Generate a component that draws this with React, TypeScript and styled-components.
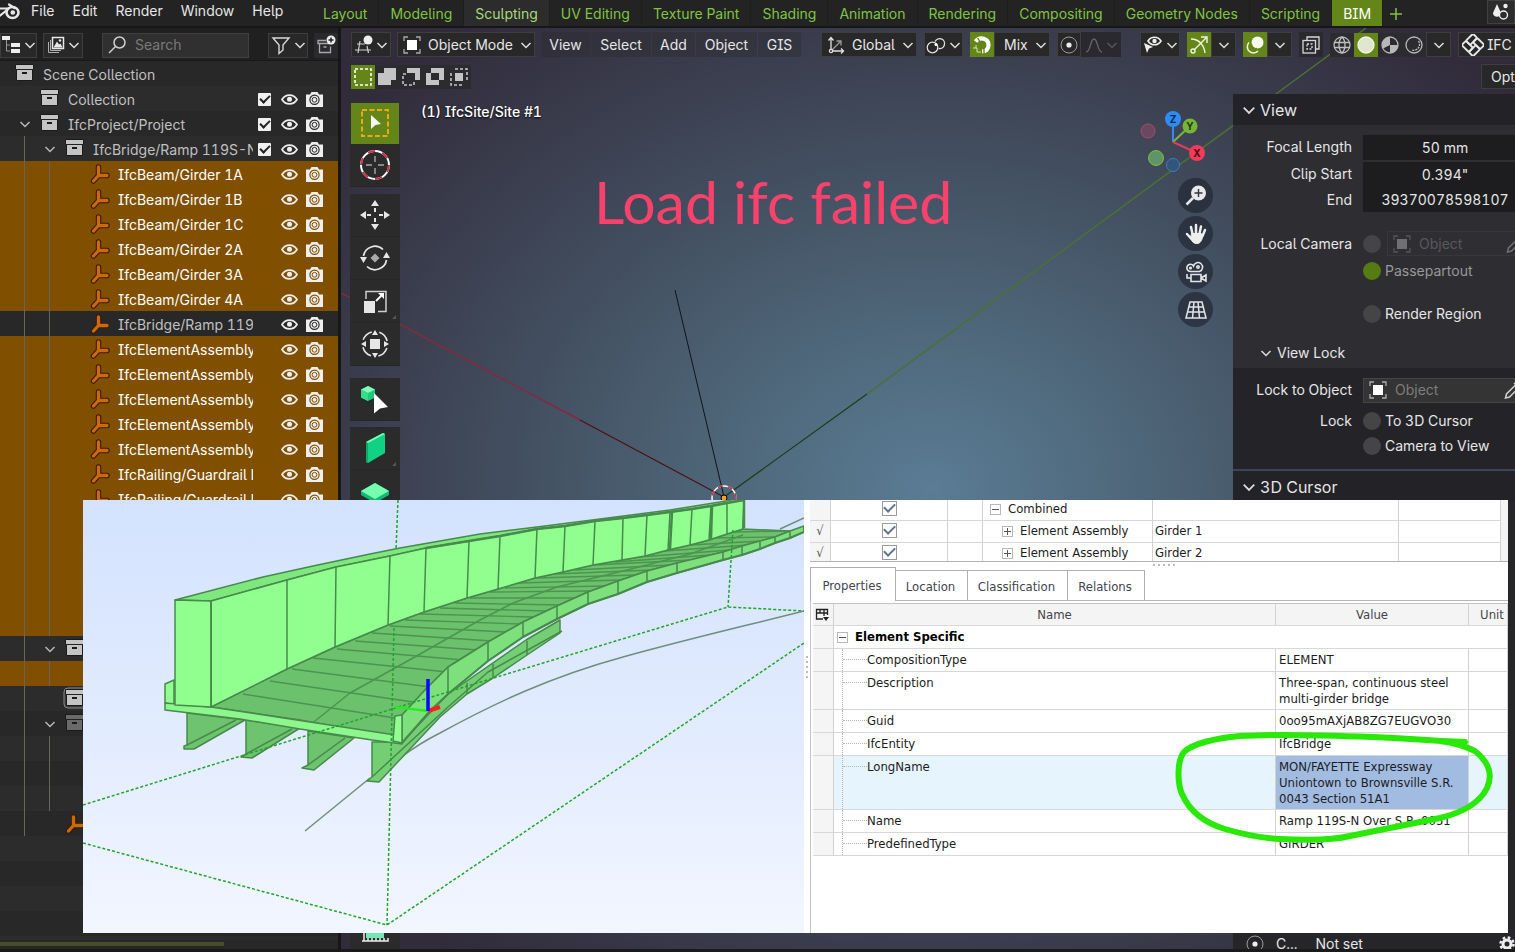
import React from "react";
import styled, { createGlobalStyle, css } from "styled-components";

const ui = `Inter, "Liberation Sans", sans-serif`;
const win = `"DejaVu Sans Condensed", "Noto Sans", sans-serif`;

const GlobalStyle = createGlobalStyle`
  * { box-sizing: border-box; }
  body { margin: 0; background: #181818; }
  button, input, select { font: inherit; color: inherit; margin: 0; font-feature-settings: inherit; }
  button { border: 0; background: none; padding: 0; }
  svg { display: block; flex-shrink: 0; }
`;

const Page = styled.div`
  position: relative;
  display: flex;
  flex-direction: column;
  height: 100vh;
  min-height: 600px;
  overflow: hidden;
  padding-bottom: 3px;
  background: #1a1a1a;
  color: #e6e6e6;
  font-family: ${ui};
  font-size: 14px;
  line-height: 20px;
  font-feature-settings: "cv08", "cv05", "tnum";
`;

/* ---------- top bar ---------- */

const TopBar = styled.header`
  display: flex;
  height: 28px;
  flex-shrink: 0;
  overflow: hidden;
  background: #232323;
  border-bottom: 2px solid #171717;
`;
const MainMenu = styled.nav`
  display: flex;
  width: 312px;
  flex-shrink: 0;
  height: 22px;
`;
const MenuButton = styled.button`
  padding: 0 9px;
  white-space: nowrap;
  flex-shrink: 0;
`;
const Logo = styled.span`
  width: 22px;
  flex-shrink: 0;
`;
const Workspaces = styled.nav`
  display: flex;
  flex: 1;
  min-width: 0;
  color: #80c341;
`;
const WorkspaceTab = styled.button<{ $state?: "active" | "hover" }>`
  padding: 2px 11px 0;
  border-right: 1px solid #1e1e1e;
  white-space: nowrap;
  flex-shrink: 0;
  ${(p) => p.$state === "hover" && css`background: #2c2c2c; color: #a8da78;`}
  ${(p) => p.$state === "active" && css`background: #648618; color: #ffffff;`}
`;
const AddTab = styled.button`
  width: 26px;
  padding-top: 2px;
  display: grid;
  place-items: center;
`;
const SceneButton = styled.button`
  width: 28px;
  height: 24px;
  flex-shrink: 0;
  background: #2c2c2c;
  border: 1px solid #404040;
`;

/* ---------- outliner ---------- */

const Body = styled.div`
  display: flex;
  flex: 1;
  min-height: 0;
`;
const Outliner = styled.aside`
  width: 341px;
  flex-shrink: 0;
  display: flex;
  flex-direction: column;
  background: #282828;
  border-right: 3px solid #171717;
  overflow: hidden;
`;
const OutlinerHeader = styled.div`
  display: flex;
  align-items: center;
  height: 33px;
  flex-shrink: 0;
  padding-top: 2px;
  background: #202020;
  border-bottom: 1px solid #191919;
`;
const IconButton = styled.button<{ $w: number; $ml?: number; $on?: boolean; $plain?: boolean }>`
  display: flex;
  align-items: center;
  justify-content: center;
  gap: 3px;
  width: ${(p) => p.$w}px;
  height: 25px;
  margin-left: ${(p) => p.$ml || 0}px;
  flex-shrink: 0;
  background: ${(p) => (p.$on ? "#648618" : p.$plain ? "#2a2a2e" : "#282828")};
  border: 1px solid ${(p) => (p.$on ? "#648618" : p.$plain ? "#2a2a2e" : "#3e3e3e")};
`;
const SearchBox = styled.label`
  display: flex;
  align-items: center;
  gap: 6px;
  width: 149px;
  height: 25px;
  margin-left: 19px;
  padding-left: 4px;
  background: #303030;
  border: 1px solid #404040;
  input {
    width: 100px;
    border: 0;
    padding: 0 0 0 2px;
    background: none;
    outline: 0;
  }
  input::placeholder { color: #7a7a7a; opacity: 1; }
`;
const Tree = styled.div`
  flex: 1;
  min-height: 0;
  overflow: hidden;
`;
const TreeRow = styled.div<{ $kind: "plain" | "selected"; $alt: boolean; $dim?: boolean }>`
  display: flex;
  align-items: center;
  height: 25px;
  padding: 0 11px 0 12px;
  background: ${(p) => (p.$kind === "selected" ? "#805000" : p.$alt ? "#2c2c2c" : "#282828")};
  color: ${(p) => (p.$kind === "selected" ? "#ffffff" : "#c0c0c0")};
`;
const Cell = styled.span`
  display: grid;
  place-items: center;
  width: 25px;
  height: 25px;
  flex-shrink: 0;
`;
const Guide = styled(Cell)`
  &::after { content: ""; width: 1px; height: 25px; background: #66665f; }
`;
const RowLabel = styled.span`
  flex: 1;
  min-width: 0;
  margin-left: 6px;
  padding-top: 2px;
  overflow: hidden;
  white-space: nowrap;
`;
const Toggles = styled.span`
  display: flex;
  justify-content: flex-end;
  width: 74px;
  padding-top: 1px;
  flex-shrink: 0;
`;
const RowCheck = styled.input`
  appearance: none;
  width: 13px;
  height: 13px;
  background: #f0f0f0;
  border-radius: 1px;
  display: grid;
  place-items: center;
  &::after {
    content: "";
    width: 8px;
    height: 4px;
    margin-top: -3px;
    border: solid #222222;
    border-width: 0 0 2px 2px;
    transform: rotate(-45deg);
  }
`;
const ScrollThumb = styled.div`
  width: 224px;
  height: 4px;
  margin: 2px 0 3px;
  flex-shrink: 0;
  background: #454d2b;
`;

/* ---------- viewport ---------- */

const Viewport = styled.main`
  position: relative;
  flex: 1;
  min-width: 0;
  display: flex;
  flex-direction: column;
  overflow: hidden;
  background: radial-gradient(ellipse 760px 600px at 590px 460px, #5a7c94 0%, #4e6679 28%, #414c5d 58%, #383848 82%, #312b3a 100%);
`;
const Scene = styled.svg`
  position: absolute;
  left: 0;
  top: 0;
`;
const ViewHeader = styled.div`
  position: relative;
  display: flex;
  align-items: center;
  height: 33px;
  padding-left: 10px;
  flex-shrink: 0;
`;
const Group = styled.div<{ $ml?: number; $gap?: number }>`
  display: flex;
  align-items: center;
  gap: ${(p) => p.$gap || 0}px;
  margin-left: ${(p) => p.$ml || 0}px;
  flex-shrink: 0;
`;
const HeaderMenu = styled.button<{ $w: number }>`
  width: ${(p) => p.$w}px;
  height: 25px;
  background: rgba(44, 44, 48, 0.45);
`;
const Picker = styled.label<{ $w: number }>`
  display: flex;
  align-items: center;
  width: ${(p) => p.$w}px;
  height: 25px;
  padding: 0 2px 0 5px;
  background: #282828;
  border: 1px solid #3e3e3e;
  select {
    appearance: none;
    flex: 1;
    min-width: 0;
    height: 23px;
    padding: 0 0 0 7px;
    border: 0;
    background: none;
    outline: 0;
  }
  select:first-child { padding-left: 4px; }
`;
const ShadeButton = styled.button<{ $on?: boolean }>`
  display: grid;
  place-items: center;
  width: 24px;
  height: 24px;
  background: ${(p) => (p.$on ? "#648618" : "#2c2c30")};
`;
const ToolSettings = styled.div`
  position: relative;
  display: flex;
  justify-content: space-between;
  align-items: center;
  height: 33px;
  padding: 0 0 2px 10px;
  flex-shrink: 0;
`;
const Options = styled.button`
  width: 34px;
  height: 25px;
  padding-left: 9px;
  overflow: hidden;
  text-align: left;
  background: #282828;
  border: 1px solid #3e3e3e;
  border-right: 0;
`;
const Workarea = styled.div`
  position: relative;
  display: flex;
  flex: 1;
  min-height: 0;
`;
const Toolbar = styled.div`
  display: flex;
  flex-direction: column;
  width: 50px;
  margin: 9px 0 0 9px;
  flex-shrink: 0;
`;
const Tool = styled.button<{ $on?: boolean; $gap?: number }>`
  position: relative;
  display: grid;
  place-items: center;
  width: ${(p) => (p.$on ? 48 : 50)}px;
  height: ${(p) => (p.$on ? 41 : 43)}px;
  margin: 0 auto ${(p) => p.$gap || 0}px;
  flex-shrink: 0;
  background: ${(p) => (p.$on ? "#648618" : "#2b2b2b")};
  border-bottom: 1px solid ${(p) => (p.$on ? "#648618" : "#262626")};
`;
const More = styled.span`
  position: absolute;
  right: 4px;
  bottom: 3px;
  border: 2px solid;
  border-color: transparent #555555 #555555 transparent;
`;
const Canvas = styled.div`
  position: relative;
  flex: 1;
  min-width: 0;
`;
const ActiveObject = styled.div`
  padding: 8px 0 0 21px;
  color: #ffffff;
  font-weight: 500;
  text-shadow: 0 1px 2px #000000;
`;
const Failure = styled.div`
  position: absolute;
  left: 194px;
  top: 72px;
  color: #f8426b;
  font: 59px/72px Lato, sans-serif;
  white-space: nowrap;
`;
const Navigation = styled.div`
  position: absolute;
  right: 20px;
  top: 14px;
  width: 78px;
  display: flex;
  flex-direction: column;
  align-items: flex-end;
  gap: 3px;
`;
const NavButton = styled.button`
  display: grid;
  place-items: center;
  width: 35px;
  height: 35px;
  border-radius: 50%;
  background: rgba(32, 36, 48, 0.66);
`;

/* ---------- sidebar ---------- */

const Sidebar = styled.aside`
  width: 282px;
  flex-shrink: 0;
  display: flex;
  flex-direction: column;
  overflow: hidden;
  background: #26262a;
`;
const PanelTitle = styled.button`
  display: flex;
  align-items: center;
  gap: 4px;
  height: 31px;
  padding: 1px 0 0 9px;
  flex-shrink: 0;
  font-size: 16px;
  background: #222227;
  text-align: left;
`;
const ViewPanel = styled.div`
  height: 243px;
  padding-top: 8px;
  background: #2e2e32;
  flex-shrink: 0;
`;
const LockPanel = styled.div`
  height: 103px;
  padding-top: 9px;
  border-bottom: 2px solid #3b4754;
  background: #242428;
  flex-shrink: 0;
`;
const Field = styled.div<{ $h: number; $mt?: number }>`
  display: flex;
  align-items: center;
  height: ${(p) => p.$h}px;
  margin-top: ${(p) => p.$mt || 0}px;
`;
const FieldLabel = styled.label`
  width: 119px;
  margin-right: 11px;
  text-align: right;
  flex-shrink: 0;
  white-space: nowrap;
`;
const NumberInput = styled.input`
  width: 164px;
  height: 25px;
  padding: 0;
  border: 0;
  flex-shrink: 0;
  text-align: center;
  background: #1d1d1f;
`;
const RoundCheck = styled.input`
  appearance: none;
  width: 18px;
  height: 18px;
  margin: 0 4px 0 0;
  flex-shrink: 0;
  border-radius: 50%;
  background: #454547;
  &:checked { background: #577b13; }
`;
const CheckLabel = styled.label<{ $dim?: boolean }>`
  display: flex;
  align-items: center;
  white-space: nowrap;
  color: ${(p) => (p.$dim ? "#98989a" : "#e6e6e6")};
`;
const Push = styled.span`
  width: 130px;
  flex-shrink: 0;
`;
const ObjectPicker = styled.button<{ $dim?: boolean; $w: number }>`
  display: flex;
  align-items: center;
  width: 168px;
  height: 25px;
  padding-left: 5px;
  flex-shrink: 0;
  color: ${(p) => (p.$dim ? "#58585a" : "#7d7d7d")};
  background: ${(p) => (p.$dim ? "#2f2f33" : "#343434")};
  border: 1px solid ${(p) => (p.$dim ? "#38383c" : "#444444")};
  span { width: ${(p) => p.$w}px; padding-left: 8px; text-align: left; }
`;
const SubTitle = styled.button`
  display: flex;
  align-items: center;
  gap: 5px;
  height: 30px;
  margin-top: 12px;
  padding-left: 27px;
`;
const SidebarFoot = styled.div`
  display: flex;
  align-items: center;
  gap: 11px;
  height: 14px;
  margin-top: auto;
  padding: 3px 0 0 12px;
  flex-shrink: 0;
`;
const FootValue = styled.span`
  width: 181px;
  padding-left: 7px;
`;

/* ---------- IFC viewer window ---------- */

const ViewerWindow = styled.section`
  position: absolute;
  left: 83px;
  right: 7px;
  top: 500px;
  bottom: 19px;
  display: flex;
  overflow: hidden;
  background: #ffffff;
  color: #1c1c22;
  font-family: ${win};
  font-size: 13px;
  line-height: 16px;
  font-feature-settings: normal;
`;
const ModelView = styled.div`
  width: 721px;
  flex-shrink: 0;
  overflow: hidden;
  background: linear-gradient(#d3e2fe, #e4edff 60%, #f2f6ff);
`;
const Splitter = styled.div`
  width: 6px;
  flex-shrink: 0;
  display: flex;
  flex-direction: column;
  align-items: center;
  padding-top: 156px;
  gap: 3px;
  i { width: 2px; height: 2px; background: #bbbbbb; }
`;
const Details = styled.div`
  flex: 1;
  min-width: 0;
  display: flex;
  flex-direction: column;
  overflow: hidden;
`;
const ElementPane = styled.div`
  height: 62px;
  padding-right: 7px;
  overflow: hidden;
  flex-shrink: 0;
  background: #f3f3f3;
  border-bottom: 1px solid #b4b4b4;
`;
const Grid = styled.table`
  width: 100%;
  table-layout: fixed;
  border-collapse: separate;
  border-spacing: 0;
  background: #ffffff;
  th, td {
    border-right: 1px solid #d2d2d2;
    border-bottom: 1px solid #d8d8d8;
    padding: 3px 2px 2px;
    text-align: left;
    vertical-align: top;
    font-weight: 400;
  }
`;
const ElementRow = styled.tr`
  height: 22px;
  td { padding-top: 2px; }
  &:first-child { height: 21px; }
  &:first-child td { padding-top: 1px; }
`;
const MarkCell = styled.td`
  && { background: #f5f5f5; color: #555555; text-align: center; }
`;
const CenterCell = styled.td`
  && { text-align: center; }
`;
const GridCheck = styled.input`
  appearance: none;
  width: 15px;
  height: 15px;
  border: 1px solid #9b9b9b;
  background: #ffffff;
  display: inline-grid;
  vertical-align: top;
  place-items: center;
  &::after {
    content: "";
    width: 9px;
    height: 5px;
    margin-top: -4px;
    border: solid #5b7595;
    border-width: 0 0 2px 2px;
    transform: rotate(-45deg);
  }
`;
const Branch = styled.span<{ $depth: number }>`
  display: flex;
  align-items: center;
  padding-left: ${(p) => p.$depth}px;
  white-space: nowrap;
`;
const Expander = styled.button`
  display: grid;
  place-items: center;
  width: 11px;
  height: 11px;
  margin-right: 7px;
  flex-shrink: 0;
  border: 1px solid #b8b8b8;
  background: #ffffff;
`;
const Grip = styled.div`
  display: flex;
  gap: 3px;
  height: 5px;
  padding: 2px 0 0 343px;
  flex-shrink: 0;
  i { width: 2px; height: 2px; background: #bbbbbb; }
`;
const TabStrip = styled.div`
  display: flex;
  align-items: flex-end;
  height: 34px;
  flex-shrink: 0;
  border-bottom: 1px solid #b4b4b4;
`;
const Tab = styled.button<{ $w: number; $active?: boolean }>`
  width: ${(p) => p.$w}px;
  height: ${(p) => (p.$active ? 34 : 30)}px;
  padding: 2px 2px 0 0;
  margin-bottom: ${(p) => (p.$active ? -1 : 0)}px;
  color: #444450;
  background: #ffffff;
  border: 1px solid #b0b0b0;
  border-left-width: ${(p) => (p.$active ? 1 : 0)}px;
  border-bottom: 0;
`;
const PropertyPane = styled.div`
  flex: 1;
  padding: 2px 0 0 2px;
  border-left: 1px solid #c4c4c4;
`;
const HeadRow = styled.tr`
  height: 23px;
  th {
    padding-top: 2px;
    text-align: center;
    vertical-align: middle;
    color: #44444c;
    background: #f4f4f4;
    border-top: 1px solid #c4c4c4;
  }
  th:last-child { padding-left: 10px; }
`;
const PropRow = styled.tr<{ $current?: boolean }>`
  height: 23px;
  td { background: ${(p) => (p.$current ? "#e6f4fe" : "#ffffff")}; }
  td:nth-child(3) { padding-left: 3px; background: ${(p) => (p.$current ? "#a2bbe1" : "#ffffff")}; }
`;
const PropName = styled.td`
  && { padding: 0; height: 1px; }
  > span {
    display: block;
    position: relative;
    height: 100%;
    min-height: 22px;
    margin-left: 8px;
    padding: 3px 0 0 24px;
    border-left: 1px dotted #b5b5b5;
  }
  > span::before {
    content: "";
    position: absolute;
    left: 0;
    top: 10px;
    width: 24px;
    border-top: 1px dotted #b5b5b5;
  }
`;
const GroupCell = styled.td`
  && { padding-left: 3px; font-weight: 700; color: #000000; }
`;
const Marker = styled.svg`
  position: absolute;
  right: 0;
  top: 228px;
`;

/* ---------- icons ---------- */

const Chevron = ({ c = "#dddddd", s = 12 }: { c?: string; s?: number }) => (
  <svg width={s} height={s} viewBox="0 0 12 12" fill="none" stroke={c} strokeWidth="1.500">
    <path d="M1.500 4 6 8.500 10.500 4" />
  </svg>
);

const BlenderLogo = () => (
  <svg width="22" height="22" viewBox="0 0 22 22" fill="none" stroke="#e8e8e8">
    <path d="M9 4.500 14.500 8" strokeWidth="2.200" strokeLinecap="round" />
    <path d="M-1 8.500h10M-1 16.500 7 10" strokeWidth="2.200" />
    <ellipse cx="12.500" cy="12.500" rx="6" ry="5.500" strokeWidth="2.600" />
    <circle cx="12.800" cy="12.500" r="2.300" fill="#e8e8e8" stroke="none" />
  </svg>
);

const OutlinerIcon = () => (
  <svg width="19" height="20" viewBox="0 0 19 20" fill="#eeeeee">
    <rect x="0" y="1" width="8" height="4" />
    <rect x="9" y="8" width="9" height="4" />
    <rect x="9" y="14" width="9" height="4" />
    <path d="M4.500 5v11H8M4.500 10H8" fill="none" stroke="#999999" />
  </svg>
);

const ImagesIcon = () => (
  <svg width="18" height="18" viewBox="0 0 18 18" fill="none" stroke="#e8e8e8">
    <path d="M5.500 1.500h11v11h-11z" strokeWidth="1.500" />
    <path d="M3.500 4v10.500H14M1.500 6v10.500H12" stroke="#b0b0b0" />
    <path d="M6.500 11.500 10 5.500l2 3 1.500-1 2 4z" fill="#e8e8e8" stroke="none" />
    <circle cx="13" cy="4.500" r="1.200" fill="#e8e8e8" stroke="none" />
  </svg>
);

const SearchIcon = () => (
  <svg width="20" height="20" viewBox="0 0 20 20" fill="none" stroke="#d0d0d0" strokeWidth="1.500">
    <circle cx="12.500" cy="7.500" r="5.500" />
    <path d="M8.500 11.500 2 18" />
  </svg>
);

const FunnelIcon = () => (
  <svg width="20" height="19" viewBox="0 0 20 19" fill="none" stroke="#d8d8d8" strokeWidth="1.400">
    <path d="M2 2h16l-6 7v5l-4 3.500V9z" />
  </svg>
);

const AddCollectionIcon = () => (
  <svg width="20" height="20" viewBox="0 0 20 20" fill="none" stroke="#a8a8a8" strokeWidth="1.300">
    <path d="M10 5.500H2v3h12M3.500 8.500v9h11v-6M7.500 12h3" />
    <circle cx="15" cy="5" r="4.500" fill="#eeeeee" stroke="none" />
    <path d="M15 2.500v5M12.500 5h5" stroke="#222222" strokeWidth="1.500" />
  </svg>
);

const BoxIcon = ({ fade, ring }: { fade?: boolean; ring?: boolean }) => {
  const c = fade ? "#6a6a6a" : "#c4c4c4";
  return (
    <svg width="23" height="23" viewBox="0 0 23 23">
      {ring && <rect x="1" y="1" width="24" height="20" rx="4" fill="#383838" stroke="#8a8a8a" />}
      <path d="M2.500 2.500h18v5h-1v11h-16v-11h-1z" fill={c} stroke="#1a1a1a" />
      <path d="M3 7.500h17" stroke="#222222" />
      <rect x="9" y="10" width="5" height="2" fill="#1a1a1a" />
    </svg>
  );
};

const EmptyIcon = () => (
  <svg width="22" height="22" viewBox="0 0 22 22" fill="none" strokeLinecap="round" strokeLinejoin="round">
    <path d="M9.500 4V12.500L4.500 18M9.500 12.500h8.500" stroke="#3a1a00" strokeWidth="5.500" />
    <path d="M9.500 4V12.500L4.500 18M9.500 12.500h8.500" stroke="#cc6a08" strokeWidth="3.300" />
  </svg>
);

const EyeIcon = () => (
  <svg width="17" height="13" viewBox="0 0 17 13">
    <path d="M1 6.500C4.500.6 12.500.6 16 6.500c-3.500 5.900-11.500 5.900-15 0z" fill="none" stroke="#eeeeee" strokeWidth="1.700" />
    <circle cx="8.500" cy="6.300" r="2.500" fill="#eeeeee" />
  </svg>
);

const CameraIcon = ({ bg }: { bg: string }) => (
  <svg width="17" height="15" viewBox="0 0 17 15">
    <path d="M0 2.500h4L5.500 0h6L13 2.500h4V15H0z" fill="#eeeeee" />
    <circle cx="8.500" cy="7.800" r="4.600" fill="none" stroke={bg} strokeWidth="1.200" />
    <circle cx="8.500" cy="7.800" r="2.400" fill="none" stroke={bg} strokeWidth="1" />
  </svg>
);

const GridBallIcon = () => (
  <svg width="18" height="20" viewBox="0 0 18 20" fill="none" stroke="#d0d0d0" strokeWidth="1.200">
    <path d="M2 9h8M0 15h16M5 6 3 18M12 11l1.500 7" />
    <circle cx="13" cy="5" r="4.500" fill="#eeeeee" stroke="none" />
  </svg>
);

const ObjectIcon = ({ c = "#ffffff" }: { c?: string }) => (
  <svg width="18" height="18" viewBox="0 0 18 18" fill="none" stroke={c} strokeWidth="1.300">
    <path d="M1 5V1h4M13 1h4v4M17 13v4h-4M5 17H1v-4" opacity="0.600" />
    <rect x="4" y="4" width="10" height="10" fill={c} stroke="none" />
  </svg>
);

const AxesIcon = () => (
  <svg width="18" height="18" viewBox="0 0 18 18" fill="none" stroke="#e2e2e2" strokeWidth="1.300">
    <path d="M4 2v13h12M1.500 4.500 4 1.500l2.500 3M14 12.500l2.500 2.500-2.500 2.500" />
    <path d="m4 15 10-10M9.500 5H14v4.500" stroke="#9a9a9a" />
    <circle cx="4" cy="15" r="1.600" fill="#222222" />
  </svg>
);

const LinkIcon = () => (
  <svg width="20" height="20" viewBox="0 0 20 20" fill="none" stroke="#e2e2e2" strokeWidth="1.300">
    <circle cx="6.500" cy="12.500" r="5.300" />
    <path d="M9 6.500a5 5 0 1 1 3.500 7" />
    <circle cx="10" cy="9.500" r="1.500" fill="#ffffff" stroke="none" />
  </svg>
);

const MagnetIcon = () => (
  <svg width="20" height="20" viewBox="0 0 20 20" fill="none" stroke="#ffffff" strokeWidth="4.200">
    <path d="M3.500 6.500C8 1 16.500 3.500 16.500 10c0 4-2.500 6.500-6.500 6.500" />
    <path d="m5.500 3 4 6M12 12v7" stroke="#648618" strokeWidth="1.300" />
    <path d="M1 13h4v4h4M4 10v3" strokeWidth="1" stroke="#d5e2b8" />
  </svg>
);

const TargetIcon = () => (
  <svg width="20" height="20" viewBox="0 0 20 20">
    <circle cx="10" cy="10" r="8" fill="none" stroke="#9a9a9a" />
    <circle cx="10" cy="10" r="2.600" fill="#eeeeee" />
  </svg>
);

const FalloffIcon = () => (
  <svg width="18" height="18" viewBox="0 0 18 18" fill="none" stroke="#66666e" strokeWidth="1.300">
    <path d="M1 16c5 0 4-13 8-13s3 13 8 13" />
  </svg>
);

const VisibilityIcon = () => (
  <svg width="20" height="20" viewBox="0 0 20 20">
    <path d="M5 6c3-5 10-5 13 0-3 5-10 5-13 0z" fill="none" stroke="#eeeeee" strokeWidth="1.600" />
    <circle cx="11.500" cy="6" r="2.200" fill="#eeeeee" />
    <path d="m1 8 9 4-4 1.500L4 18z" fill="#eeeeee" />
  </svg>
);

const GizmoIcon = () => (
  <svg width="20" height="20" viewBox="0 0 20 20" fill="none" stroke="#f0f5e0" strokeWidth="1.400">
    <path d="M2 4c8 0 13 6 14 14M5 15 17 3M12 2h6v6" />
    <circle cx="4" cy="16" r="2" />
  </svg>
);

const OverlayIcon = () => (
  <svg width="20" height="20" viewBox="0 0 20 20">
    <circle cx="12.500" cy="7.500" r="6" fill="#f5f9ea" />
    <path d="M4 7.500A6 6 0 1 0 13 16" fill="none" stroke="#f0f5e0" strokeWidth="1.500" />
    <path d="M6.500 8.500a4.500 4.500 0 0 0 5.500 5" fill="none" stroke="#648618" strokeWidth="1.300" />
  </svg>
);

const XrayIcon = () => (
  <svg width="20" height="20" viewBox="0 0 20 20" fill="none" stroke="#d8d8d8" strokeWidth="1.300">
    <path d="M6 5V2h12v12h-3" />
    <rect x="2" y="5.500" width="12.500" height="12.500" />
    <path d="M6 9h5v5H6z" strokeDasharray="2 1.500" />
  </svg>
);

const SphereIcon = ({ kind }: { kind: "wire" | "solid" | "material" | "render" }) => (
  <svg width="20" height="20" viewBox="0 0 20 20" fill="none" stroke="#c0c0c0" strokeWidth="1.300">
    <circle cx="10" cy="10" r="8" fill={kind === "solid" ? "#dfe6cd" : "none"} stroke={kind === "solid" ? "#f3f6ea" : "#b8b8b8"} />
    {kind === "wire" && <path d="M2 7.500h16M2 12.500h16M10 2c-4 4-4 12 0 16M10 2c4 4 4 12 0 16" />}
    {kind === "material" && <path d="M10 10V18A8 8 0 0 0 18 10zM10 2v8l-7 3.500A8 8 0 0 1 10 2z" fill="#b8b8b8" stroke="none" />}
    {kind === "render" && <path d="M14.500 6a6 6 0 0 1-7 9" strokeDasharray="2 1" />}
  </svg>
);

const KnotIcon = () => (
  <svg width="22" height="22" viewBox="0 0 22 22" fill="none" stroke="#e8e8e8" strokeWidth="1.900">
    <g transform="rotate(45 11 11)">
      <rect x="3" y="3" width="6" height="10" rx="1.500" />
      <rect x="13" y="9" width="6" height="10" rx="1.500" />
      <rect x="9" y="3" width="10" height="6" rx="1.500" />
      <rect x="3" y="13" width="10" height="6" rx="1.500" />
    </g>
  </svg>
);

const DropsIcon = () => (
  <svg width="22" height="22" viewBox="0 0 22 22">
    <path d="m9 3 4 9c0 5-8 5-8 0z" fill="#eeeeee" />
    <circle cx="15.500" cy="14" r="4" fill="#2c2c2c" stroke="#eeeeee" strokeWidth="1.400" />
    <circle cx="17.500" cy="5" r="2.200" fill="#eeeeee" />
  </svg>
);

const PenIcon = ({ c }: { c: string }) => (
  <svg width="18" height="18" viewBox="0 0 18 18" fill="none" stroke={c} strokeWidth="1.500">
    <path d="m1.500 17 1-4 9-9 3 3-9 9zM10 2l6 6" />
  </svg>
);

type SelectMode = "set" | "extend" | "subtract" | "invert" | "intersect";
const ModeIcon = ({ mode }: { mode: SelectMode }) => (
  <svg width="18" height="18" viewBox="0 0 18 18" fill="#c4c4c4">
    {mode === "set" && <rect x="1" y="1" width="16" height="16" fill="none" stroke="#ffffff" strokeWidth="1.600" strokeDasharray="3 2" />}
    {mode === "extend" && <path d="M6 0h12v12h-5v5H0V5h6z" />}
    {mode === "subtract" && <><path d="M5 0h13v12h-5V5H5z" /><path d="M4 6H1v11h11v-4" fill="none" stroke="#c4c4c4" strokeWidth="1.600" strokeDasharray="3 2" /></>}
    {mode === "invert" && <path fillRule="evenodd" d="M5 0h13v12h-5v5H0V5h5zM5 5v7h8V5z" />}
    {mode === "intersect" && <><rect x="5" y="5" width="8" height="8" /><path d="M5 1h12v12M1 5v12h12" fill="none" stroke="#c4c4c4" strokeWidth="1.600" strokeDasharray="3 2" /></>}
  </svg>
);

const SelectBoxTool = () => (
  <svg width="30" height="30" viewBox="0 0 30 30">
    <rect x="2" y="2" width="26" height="26" fill="none" stroke="#e8a91c" strokeWidth="2" strokeDasharray="5 2.500" />
    <path d="m11 7 10 9-5.500 1L11 21z" fill="#f4f4f4" />
  </svg>
);
const CursorTool = () => (
  <svg width="32" height="32" viewBox="0 0 32 32" fill="none">
    <circle cx="16" cy="16" r="14" stroke="#ffffff" strokeWidth="2" />
    <circle cx="16" cy="16" r="14" stroke="#c8324a" strokeWidth="2" strokeDasharray="7.300 7.300" />
    <path d="M16 7v6M16 19v6M7 16h6M19 16h6" stroke="#a8a8a8" strokeWidth="1.400" />
  </svg>
);
const MoveTool = () => (
  <svg width="30" height="30" viewBox="0 0 30 30" fill="#e6e6e6">
    <path d="m15 0 4 6h-8zM15 30l4-6h-8zM0 15l6-4v8zM30 15l-6-4v8zM14 8h2v4h-2zM14 18h2v4h-2zM7 14h4v2H7zM19 14h4v2h-4z" />
  </svg>
);
const RotateTool = () => (
  <svg width="30" height="28" viewBox="0 0 30 28" fill="none" stroke="#e6e6e6" strokeWidth="1.700">
    <path d="M3.500 12C5 3 16-1 23 5.500M26.500 16C25 25 14 29 7 22.500" />
    <path d="M0 13h7l-3.500 6zM23 14h7l-3.500-6z" fill="#e6e6e6" stroke="none" />
    <path d="m15 9.500 4.500 4.500-4.500 4.500-4.500-4.500z" fill="#aaaaaa" stroke="none" />
  </svg>
);
const ScaleTool = () => (
  <svg width="26" height="26" viewBox="0 0 26 26" fill="none" stroke="#cfcfcf" strokeWidth="1.500">
    <path d="M4 11V3.500h20v20h-8" />
    <rect x="2" y="13" width="11" height="12" fill="#e6e6e6" stroke="none" />
    <path d="m14 13 6-6" stroke="#ffffff" strokeWidth="1.800" />
    <path d="M22 5v6l-6-6z" fill="#ffffff" stroke="none" />
  </svg>
);
const TransformTool = () => (
  <svg width="30" height="30" viewBox="0 0 30 30" fill="#e6e6e6">
    <circle cx="15" cy="15" r="12.500" fill="none" stroke="#e6e6e6" strokeWidth="1.600" strokeDasharray="12 7.630" strokeDashoffset="-4" />
    <rect x="10" y="10" width="10" height="10" />
    <path d="m15 1 3 5h-6zM15 29l3-5h-6zM1 15l5-3v6zM29 15l-5-3v6z" />
  </svg>
);
const CubeCursorTool = () => (
  <svg width="32" height="32" viewBox="0 0 32 32">
    <path d="m9 3 7 3.500v8L9 18l-7-3.500v-8z" fill="#1fc978" />
    <path d="m9 3 7 3.500L9 10 2 6.500z" fill="#83ffb8" />
    <path d="M9 10v8l-7-3.500v-8z" fill="#36dd8b" />
    <path d="m15 10 14 14-8 1.500-6 5z" fill="#ffffff" />
  </svg>
);
const WallTool = () => (
  <svg width="28" height="34" viewBox="0 0 28 34">
    <path d="M5 11 22 2l2 1v19L7 32l-2-1z" fill="#11d183" />
    <path d="M5 11 22 2l2 1L7 12z" fill="#77ffb6" />
    <path d="m5 11 2 1v20l-2-1z" fill="#0aa968" />
  </svg>
);
const SlabTool = () => (
  <svg width="30" height="24" viewBox="0 0 30 24">
    <path d="m1 12 14-8 14 8v4l-14 8-14-8z" fill="#12b873" />
    <path d="m1 12 14-8 14 8-14 8z" fill="#77ffb0" />
  </svg>
);
const TerrainTool = () => (
  <svg width="28" height="14" viewBox="0 0 28 14">
    <rect x="5" y="1" width="18" height="8" fill="#72e8b4" />
    <path d="M1 12h26V9M3 1v11M7 12V9M11 12V9M15 12V9M19 12V9M23 12V9" stroke="#eeeeee" strokeWidth="1.500" fill="none" />
  </svg>
);

const AxisGizmo = () => (
  <svg width="78" height="67" viewBox="-6 0 78 67" fontFamily="Inter, sans-serif" fontSize="10" fontWeight="700" textAnchor="middle">
    <g strokeWidth="2">
      <path d="M32 34V12" stroke="#2f8bf5" />
      <path d="m32 34 17-16" stroke="#77b53a" />
      <path d="m32 34 24 11" stroke="#e23c5c" />
    </g>
    <circle cx="7" cy="23" r="7" fill="#6a4862" stroke="#a84a68" />
    <circle cx="15" cy="50" r="7.500" fill="#5e9468" stroke="#7cc038" />
    <circle cx="32" cy="57" r="6.500" fill="#33557c" stroke="#3a7cc0" />
    <circle cx="32" cy="11" r="8" fill="#2f8bf5" />
    <circle cx="49" cy="18" r="7.500" fill="#77b53a" />
    <circle cx="56" cy="45" r="8" fill="#f13b5b" />
    <text x="32" y="15" fill="#0e2a4c">Z</text>
    <text x="49" y="22" fill="#203a08">Y</text>
    <text x="56" y="49" fill="#4c0814">X</text>
  </svg>
);
const ZoomIcon = () => (
  <svg width="22" height="22" viewBox="0 0 22 22">
    <circle cx="13.500" cy="8" r="7.500" fill="#e8e8ec" />
    <path d="m8 13-6.500 6.500" stroke="#e8e8ec" strokeWidth="2.500" />
    <path d="M13.500 4v8M9.500 8h8" stroke="#2c3440" strokeWidth="1.400" />
  </svg>
);
const HandIcon = () => (
  <svg width="22" height="22" viewBox="0 0 22 22" fill="none" stroke="#eeeeee" strokeWidth="2.500" strokeLinecap="round">
    <path d="M7.500 11 6 4M11 10V2M14.500 10.500 16 3.500M17.500 13l2.500-6M6.500 16 2 11" />
    <path d="M7 10.500h9l2 1.500c-1 6-3 8.500-6 8.500-4 0-5-2-6.500-5.500z" fill="#eeeeee" strokeWidth="1" />
  </svg>
);
const MovieIcon = () => (
  <svg width="24" height="24" viewBox="0 0 24 24" fill="none" stroke="#e4e4e8" strokeWidth="1.600">
    <path d="M6.500 11.500a3.600 3.600 0 1 1 3-5.500 4.600 4.600 0 1 1 6 5.500z" />
    <circle cx="6.500" cy="8" r="0.800" />
    <circle cx="14" cy="7" r="1.200" />
    <path d="M7 14.500h10v7H7zM3 14v4h4M17 18l5-3v6z" />
  </svg>
);
const PerspectiveIcon = () => (
  <svg width="22" height="18" viewBox="0 0 22 18" fill="none" stroke="#e4e4e8" strokeWidth="1.500">
    <path d="M5 1h12l4 16H1zM4 6h14M2.500 11h17M9 1 7.500 17M13 1l1.500 16" />
  </svg>
);
const GearIcon = () => (
  <svg width="16" height="16" viewBox="0 0 16 16">
    <circle cx="8" cy="8" r="4" fill="none" stroke="#eeeeee" strokeWidth="3" />
    <circle cx="8" cy="8" r="6.500" fill="none" stroke="#eeeeee" strokeWidth="2.500" strokeDasharray="2.600 2.500" />
  </svg>
);

/* ---------- bridge model ---------- */

type P = [number, number];
const pts = (a: P[]) => a.map((p) => p.join(",")).join(" ");

const wallTop: P[] = [[211, 601], [287, 580], [336, 567], [390, 556], [426, 548], [469, 541], [500, 536], [537, 529], [565, 526], [595, 521], [623, 518], [647, 515], [670, 512], [692, 509], [711, 506], [727, 503], [744, 500]];
const wallBase: P[] = [[211, 707], [287, 669], [335, 647], [388, 625], [424, 612], [467, 598], [498, 589], [535, 578], [563, 572], [593, 565], [622, 560], [645, 556], [668, 550], [690, 545], [709, 540], [727, 534], [743, 529]];
const wallBack: P[] = [[175, 600], [263, 577], [313, 566], [370, 554], [400, 548], [440, 541], [480, 534], [537, 527], [600, 519], [670, 510], [720, 502], [736, 499]];
const curbTop: P[] = [[402, 715], [425, 690], [448, 667], [488, 642], [523, 622], [557, 606], [588, 592], [618, 581], [647, 571], [677, 563], [723, 552], [742, 546], [760, 541], [775, 537], [790, 531], [804, 526]];
const curbBase: P[] = [[402, 743], [430, 711], [448, 694], [488, 661], [523, 637], [557, 619], [588, 604], [618, 594], [647, 582], [677, 573], [723, 560], [742, 555], [760, 549], [775, 543], [790, 538], [804, 532]];
const jointStart: P[] = [[243, 694], [270, 681], [292, 669], [313, 658], [337, 649], [355, 641], [372, 633], [390, 626], [405, 620], [420, 614], [440, 608], [455, 603], [470, 598], [490, 592], [505, 588], [520, 583], [537, 578], [555, 574], [575, 570], [595, 565], [615, 562], [640, 557], [665, 551], [690, 545], [715, 538], [735, 532]];
const jointEnd: P[] = [[395, 718], [413, 702], [430, 687], [447, 672], [463, 660], [478, 650], [492, 641], [506, 632], [520, 624], [533, 617], [546, 611], [560, 605], [575, 598], [590, 591], [605, 586], [620, 580], [636, 575], [652, 570], [670, 565], [690, 560], [710, 555], [730, 550], [748, 545], [762, 541], [775, 537], [790, 531]];

const Bridge = () => (
  <svg width="721" height="433" viewBox="83 500 721 433" stroke="#478a4c" strokeWidth="1.500" strokeLinejoin="round">
    <path d="M305 831 370 778M400 758C412 749 426 740 440 733 495 703 550 677 623 657S745 626 804 611M780 529 804 518" fill="none" stroke="#6f8f7c" />
    <g fill="#6ec46e">
      <path d="M187 713 245 720 194 749 184 749 184 746 187 745z" />
      <path d="M246 720 300 728 252 758 241 757 246 754z" />
      <path d="M308 731 354 738 314 770 302 768 308 765z" />
    </g>
    <path d="M372 742 402 742 448 694 526 640 560 620 560 633 527 655 493 678 467 694 440 717 379 782 367 781 372 777z" fill="#74cf74" />
    <path d="M187 745 236 720M246 754 292 729M308 765 345 738M372 777 448 707 488 672 562 631" fill="none" />
    <path d="M467 683v11M493 664v14M527 641v14" />
    <polygon points={pts([...wallBase, [790, 531], ...curbTop.slice(0, 14).reverse(), [396, 738], [300, 720]])} fill="#6bc16c" />
    {jointStart.map((s, i) => (
      <line key={i} x1={s[0]} y1={s[1]} x2={jointEnd[i][0]} y2={jointEnd[i][1]} stroke="#4c9450" strokeWidth="1.300" />
    ))}
    <path d="M310 725 350 693 413 658 480 620 513 603 557 587 627 570 690 554 743 535" fill="none" stroke="#4c9450" />
    <path d="M165 684 174 680V705L165 703z" fill="#90ff90" />
    <path d="M165 703 211 707 402 736V744L372 740 300 729 240 719 165 710z" fill="#8df68d" />
    <polygon points={pts([...curbTop, ...[...curbBase].reverse()])} fill="#7de07d" />
    <path d="M395 716 402 715V743L393 741z" fill="#90ff90" />
    {curbTop.slice(2).map((p, i) => (
      <line key={i} x1={p[0]} y1={p[1]} x2={curbBase[i + 2][0]} y2={curbBase[i + 2][1]} />
    ))}
    <polygon points={pts([...wallBack, ...[...wallTop].reverse()])} fill="#7ee87e" />
    <polygon points={pts([...wallTop, ...[...wallBase].reverse()])} fill="#90ff90" />
    <polygon points="175,600 211,601 211,707 175,705" fill="#90ff90" />
    {wallTop.map((p, i) => (
      <line key={i} x1={p[0]} y1={p[1]} x2={wallBase[i][0]} y2={wallBase[i][1]} />
    ))}
    <path d="M672 512 670 549M712 506 711 539M744 500V528" strokeWidth="2.500" />
    <polyline points={pts(wallTop.slice(4))} fill="none" strokeWidth="2.500" />
    <polyline points={pts(curbBase)} fill="none" strokeWidth="2" />
    <g fill="none" stroke="#1fa52d" strokeWidth="1.500" strokeDasharray="3 2">
      <path d="M398 500 396 550M394 628 387 925M83 805 402 706 487 680 728 607 804 611M733 530 728 607M83 843 387 925 804 643" />
    </g>
    <path d="M395 707 428 711" stroke="#22ee22" strokeWidth="2.500" />
    <path d="M428 711 440 707" stroke="#ff2020" strokeWidth="4" />
    <path d="M428 679V711" stroke="#0808ff" strokeWidth="3.500" />
  </svg>
);

/* ---------- data ---------- */

type RowData = {
  label?: string;
  level: number;
  icon?: "box" | "empty" | "ring" | "fade";
  open?: boolean;
  check?: boolean;
  toggles?: boolean;
  selected?: boolean;
};
const obj = (label: string, selected = true): RowData => ({ label, level: 3, icon: "empty", toggles: true, selected });
const blank = (n: number, level: number, selected: boolean): RowData[] => Array.from({ length: n }, () => ({ level, selected }));

const rows: RowData[] = [
  { label: "Scene Collection", level: 0, icon: "box" },
  { label: "Collection", level: 1, icon: "box", check: true, toggles: true },
  { label: "IfcProject/Project", level: 1, icon: "box", open: true, check: true, toggles: true },
  { label: "IfcBridge/Ramp 119S-N", level: 2, icon: "box", open: true, check: true, toggles: true },
  ...["1A", "1B", "1C", "2A", "3A", "4A"].map((n) => obj(`IfcBeam/Girder ${n}`)),
  obj("IfcBridge/Ramp 119", false),
  ...Array.from({ length: 5 }, () => obj("IfcElementAssembly")),
  obj("IfcRailing/Guardrail L"),
  obj("IfcRailing/Guardrail L"),
  ...blank(5, 3, true),
  { level: 2, icon: "box", open: true },
  { level: 3, selected: true },
  { level: 2, icon: "ring" },
  { level: 2, icon: "fade", open: true },
  ...blank(3, 3, false),
  { level: 2, icon: "empty" },
  ...blank(5, 0, false),
];

const OutlinerRow = ({ row, index }: { row: RowData; index: number }) => {
  const bg = row.selected ? "#805000" : "#282828";
  return (
    <TreeRow $kind={row.selected ? "selected" : "plain"} $alt={index % 2 === 1}>
      {row.level >= 2 && <Guide />}
      {row.level >= 3 && <Guide />}
      {row.level >= 1 && <Cell>{row.open && <Chevron c="#b8b8b8" />}</Cell>}
      <Cell>
        {row.icon === "empty" && <EmptyIcon />}
        {row.icon && row.icon !== "empty" && <BoxIcon fade={row.icon === "fade"} ring={row.icon === "ring"} />}
      </Cell>
      <RowLabel>{row.label}</RowLabel>
      <Toggles>
        {row.check && <Cell><RowCheck type="checkbox" defaultChecked aria-label={`Enable ${row.label}`} /></Cell>}
        {row.toggles && <><Cell><EyeIcon /></Cell><Cell><CameraIcon bg={bg} /></Cell></>}
      </Toggles>
    </TreeRow>
  );
};

const workspaces = ["Layout", "Modeling", "Sculpting", "UV Editing", "Texture Paint", "Shading", "Animation", "Rendering", "Compositing", "Geometry Nodes", "Scripting", "BIM"];
const modes: SelectMode[] = ["set", "extend", "subtract", "invert", "intersect"];
const properties = [
  { name: "CompositionType", value: "ELEMENT" },
  { name: "Description", value: "Three-span, continuous steel multi-girder bridge" },
  { name: "Guid", value: "0oo95mAXjAB8ZG7EUGVO30" },
  { name: "IfcEntity", value: "IfcBridge" },
  { name: "LongName", value: "MON/FAYETTE Expressway Uniontown to Brownsville S.R. 0043 Section 51A1", current: true },
  { name: "Name", value: "Ramp 119S-N Over S.R. 0051" },
  { name: "PredefinedType", value: "GIRDER" },
];

const Minus = () => <svg width="7" height="7" stroke="#555555"><path d="M0 3.500h7" /></svg>;
const Plus = () => <svg width="7" height="7" stroke="#555555"><path d="M0 3.500h7M3.500 0v7" /></svg>;
const Dots = ({ n }: { n: number }) => <>{Array.from({ length: n }, (_, i) => <i key={i} />)}</>;

export default function App() {
  return (
    <Page>
      <GlobalStyle />
      <TopBar>
        <MainMenu>
          <Logo><BlenderLogo /></Logo>
          {["File", "Edit", "Render", "Window", "Help"].map((m) => <MenuButton key={m}>{m}</MenuButton>)}
        </MainMenu>
        <Workspaces>
          {workspaces.map((w) => (
            <WorkspaceTab key={w} $state={w === "BIM" ? "active" : w === "Sculpting" ? "hover" : undefined}>{w}</WorkspaceTab>
          ))}
          <AddTab aria-label="Add workspace">
            <svg width="12" height="12" stroke="#80c341" strokeWidth="1.500"><path d="M6 0v12M0 6h12" /></svg>
          </AddTab>
        </Workspaces>
        <SceneButton aria-label="Scene"><DropsIcon /></SceneButton>
      </TopBar>

      <Body>
        <Outliner>
          <OutlinerHeader>
            <IconButton $w={37} aria-label="Editor type"><OutlinerIcon /><Chevron /></IconButton>
            <IconButton $w={40} $ml={6} aria-label="Display mode"><ImagesIcon /><Chevron /></IconButton>
            <SearchBox><SearchIcon /><input placeholder="Search" aria-label="Search" /></SearchBox>
            <IconButton $w={40} $ml={19} aria-label="Filter"><FunnelIcon /><Chevron /></IconButton>
            <IconButton $w={24} $ml={6} $plain aria-label="New collection"><AddCollectionIcon /></IconButton>
          </OutlinerHeader>
          <Tree>{rows.map((r, i) => <OutlinerRow key={i} row={r} index={i} />)}</Tree>
          <ScrollThumb />
        </Outliner>

        <Viewport>
          <Scene width="1174" height="921" viewBox="341 28 1174 921" fill="none">
            <path d="M341 293 580 420" stroke="#85293f" strokeWidth="1.500" />
            <path d="m580 420 144 77" stroke="#4c1015" strokeWidth="1.200" />
            <path d="M867 394 1366 28" stroke="#4c7030" strokeWidth="1.500" />
            <path d="m724 497 143-103" stroke="#1c3a14" strokeWidth="1.200" />
            <path d="m675 290 49 207" stroke="#101418" />
            <circle cx="724" cy="498" r="12" stroke="#ffffff" strokeWidth="1.500" />
            <circle cx="724" cy="498" r="12" stroke="#c02c3c" strokeWidth="1.500" strokeDasharray="5 5" />
            <circle cx="724" cy="498" r="3" fill="#ff9d1c" stroke="#000000" />
          </Scene>

          <ViewHeader>
            <Group $gap={6}>
              <IconButton $w={40} aria-label="Editor type"><GridBallIcon /><Chevron /></IconButton>
              <Picker $w={138}>
                <ObjectIcon />
                <select aria-label="Interaction mode"><option>Object Mode</option></select>
                <Chevron />
              </Picker>
            </Group>
            <Group $ml={6} $gap={1}>
              <HeaderMenu $w={49}>View</HeaderMenu>
              <HeaderMenu $w={60}>Select</HeaderMenu>
              <HeaderMenu $w={43}>Add</HeaderMenu>
              <HeaderMenu $w={61}>Object</HeaderMenu>
              <HeaderMenu $w={43}>GIS</HeaderMenu>
            </Group>
            <Group $ml={20} $gap={7}>
              <Picker $w={96}>
                <AxesIcon />
                <select aria-label="Orientation"><option>Global</option></select>
                <Chevron />
              </Picker>
              <IconButton $w={39} aria-label="Pivot point"><LinkIcon /><Chevron /></IconButton>
              <Group>
                <IconButton $w={24} $on aria-label="Snap"><MagnetIcon /></IconButton>
                <Picker $w={56}>
                  <select aria-label="Snap to"><option>Mix</option></select>
                  <Chevron />
                </Picker>
              </Group>
              <Group>
                <IconButton $w={24} aria-label="Proportional editing"><TargetIcon /></IconButton>
                <IconButton $w={40} $plain aria-label="Falloff"><FalloffIcon /><Chevron c="#55555c" /></IconButton>
              </Group>
            </Group>
            <Group $ml={19} $gap={7}>
              <IconButton $w={40} aria-label="Visibility"><VisibilityIcon /><Chevron /></IconButton>
              <Group>
                <IconButton $w={24} $on aria-label="Gizmos"><GizmoIcon /></IconButton>
                <IconButton $w={25} aria-label="Gizmo settings"><Chevron /></IconButton>
              </Group>
              <Group>
                <IconButton $w={24} $on aria-label="Overlays"><OverlayIcon /></IconButton>
                <IconButton $w={25} aria-label="Overlay settings"><Chevron /></IconButton>
              </Group>
              <IconButton $w={24} $plain aria-label="X-ray"><XrayIcon /></IconButton>
              <Group>
                <ShadeButton aria-label="Wireframe"><SphereIcon kind="wire" /></ShadeButton>
                <ShadeButton $on aria-label="Solid"><SphereIcon kind="solid" /></ShadeButton>
                <ShadeButton aria-label="Material preview"><SphereIcon kind="material" /></ShadeButton>
                <ShadeButton aria-label="Rendered"><SphereIcon kind="render" /></ShadeButton>
                <IconButton $w={25} aria-label="Shading settings"><Chevron /></IconButton>
              </Group>
              <IconButton $w={58} aria-label="IFC"><KnotIcon /><span>IFC</span></IconButton>
            </Group>
          </ViewHeader>

          <ToolSettings>
            <Group>
              {modes.map((m) => <ShadeButton key={m} $on={m === "set"} aria-label={m}><ModeIcon mode={m} /></ShadeButton>)}
            </Group>
            <Options>Opt</Options>
          </ToolSettings>

          <Workarea>
            <Toolbar>
              <Tool $on aria-label="Select box"><SelectBoxTool /></Tool>
              <Tool $gap={7} aria-label="Cursor"><CursorTool /></Tool>
              <Tool aria-label="Move"><MoveTool /></Tool>
              <Tool aria-label="Rotate"><RotateTool /></Tool>
              <Tool aria-label="Scale"><ScaleTool /><More /></Tool>
              <Tool $gap={12} aria-label="Transform"><TransformTool /></Tool>
              <Tool $gap={6} aria-label="Explore"><CubeCursorTool /></Tool>
              <Tool aria-label="Wall"><WallTool /><More /></Tool>
              <Tool $gap={402} aria-label="Slab"><SlabTool /></Tool>
              <Tool aria-label="Terrain"><TerrainTool /></Tool>
            </Toolbar>
            <Canvas>
              <ActiveObject>(1) IfcSite/Site #1</ActiveObject>
              <Failure>Load ifc failed</Failure>
              <Navigation>
                <AxisGizmo />
                <NavButton aria-label="Zoom"><ZoomIcon /></NavButton>
                <NavButton aria-label="Pan"><HandIcon /></NavButton>
                <NavButton aria-label="Camera view"><MovieIcon /></NavButton>
                <NavButton aria-label="Perspective"><PerspectiveIcon /></NavButton>
              </Navigation>
            </Canvas>
            <Sidebar>
              <PanelTitle><Chevron s={14} />View</PanelTitle>
              <ViewPanel>
                <Field $h={28}><FieldLabel htmlFor="focal">Focal Length</FieldLabel><NumberInput id="focal" defaultValue="50 mm" /></Field>
                <Field $h={26}><FieldLabel htmlFor="clip">Clip Start</FieldLabel><NumberInput id="clip" defaultValue={'0.394"'} /></Field>
                <Field $h={25}><FieldLabel htmlFor="end">End</FieldLabel><NumberInput id="end" defaultValue="39370078598107" /></Field>
                <Field $h={25} $mt={19}>
                  <FieldLabel htmlFor="local">Local Camera</FieldLabel>
                  <RoundCheck id="local" type="checkbox" />
                  <Group $ml={2}><ObjectPicker $w={95} $dim><ObjectIcon c="#707072" /><span>Object</span><PenIcon c="#707072" /></ObjectPicker></Group>
                </Field>
                <Field $h={25} $mt={2}>
                  <Push />
                  <CheckLabel $dim><RoundCheck type="checkbox" defaultChecked />Passepartout</CheckLabel>
                </Field>
                <Field $h={25} $mt={18}>
                  <Push />
                  <CheckLabel><RoundCheck type="checkbox" />Render Region</CheckLabel>
                </Field>
                <SubTitle><Chevron />View Lock</SubTitle>
              </ViewPanel>
              <LockPanel>
                <Field $h={26}>
                  <FieldLabel as="span">Lock to Object</FieldLabel>
                  <ObjectPicker $w={117}><ObjectIcon /><span>Object</span><PenIcon c="#d0d0d0" /></ObjectPicker>
                </Field>
                <Field $h={36}>
                  <FieldLabel as="span">Lock</FieldLabel>
                  <CheckLabel><RoundCheck type="checkbox" />To 3D Cursor</CheckLabel>
                </Field>
                <Field $h={14}>
                  <Push />
                  <CheckLabel><RoundCheck type="checkbox" />Camera to View</CheckLabel>
                </Field>
              </LockPanel>
              <PanelTitle><Chevron s={14} />3D Cursor</PanelTitle>
              <SidebarFoot>
                <TargetIcon /><span>C...</span><FootValue>Not set</FootValue><GearIcon />
              </SidebarFoot>
            </Sidebar>
          </Workarea>
        </Viewport>
      </Body>

      <ViewerWindow>
        <ModelView><Bridge /></ModelView>
        <Splitter><Dots n={5} /></Splitter>
        <Details>
          <ElementPane>
            <Grid>
              <colgroup><col style={{ width: 21 }} /><col style={{ width: 117 }} /><col style={{ width: 35 }} /><col style={{ width: 170 }} /><col style={{ width: 246 }} /><col /></colgroup>
              <tbody>
                {[["", "Combined", ""], ["√", "Element Assembly", "Girder 1"], ["√", "Element Assembly", "Girder 2"]].map(([mark, name, value], i) => (
                  <ElementRow key={i}>
                    <MarkCell>{mark}</MarkCell>
                    <CenterCell><GridCheck type="checkbox" defaultChecked aria-label={value || name} /></CenterCell>
                    <td />
                    <td><Branch $depth={i ? 17 : 5}><Expander aria-label="Expand">{i ? <Plus /> : <Minus />}</Expander>{name}</Branch></td>
                    <td>{value}</td>
                    <td />
                  </ElementRow>
                ))}
              </tbody>
            </Grid>
          </ElementPane>
          <Grip><Dots n={5} /></Grip>
          <TabStrip>
            <Tab $w={86} $active>Properties</Tab>
            <Tab $w={72}>Location</Tab>
            <Tab $w={100}>Classification</Tab>
            <Tab $w={77}>Relations</Tab>
          </TabStrip>
          <PropertyPane>
            <Grid>
              <colgroup><col style={{ width: 21 }} /><col /><col style={{ width: 193 }} /><col style={{ width: 39 }} /></colgroup>
              <thead>
                <HeadRow>
                  <th>
                    <svg width="14" height="14" fill="none" stroke="#222222" strokeWidth="1.300">
                      <path d="M8 11H1.500V1.500h11V7M1.500 5h11M5 1.500V5M9 1.500V8" /><path d="m8 9 3 4 3-4z" fill="#222222" stroke="none" />
                    </svg>
                  </th>
                  <th>Name</th><th>Value</th><th>Unit</th>
                </HeadRow>
              </thead>
              <tbody>
                <PropRow>
                  <MarkCell />
                  <GroupCell colSpan={3}><Branch $depth={0}><Expander aria-label="Collapse"><Minus /></Expander>Element Specific</Branch></GroupCell>
                </PropRow>
                {properties.map((p) => (
                  <PropRow key={p.name} $current={p.current}>
                    <MarkCell />
                    <PropName><span>{p.name}</span></PropName>
                    <td>{p.value}</td>
                    <td />
                  </PropRow>
                ))}
              </tbody>
            </Grid>
          </PropertyPane>
        </Details>
        <Marker width="348" height="120" viewBox="1160 728 348 120" fill="none" stroke="#2ae808" strokeWidth="6" strokeLinecap="round" strokeLinejoin="round">
          <path d="M1465 742C1430 741 1400 738 1373 737 1320 735 1270 734 1240 736 1215 738 1192 744 1184 752 1176 762 1178 785 1182 794 1190 812 1205 823 1225 829 1245 835 1262 838 1280 839 1300 840 1330 841 1350 836 1380 830 1420 822 1440 818 1465 812 1480 802 1487 788 1493 775 1489 762 1475 751 1465 746 1455 743 1440 741" />
        </Marker>
      </ViewerWindow>
    </Page>
  );
}
